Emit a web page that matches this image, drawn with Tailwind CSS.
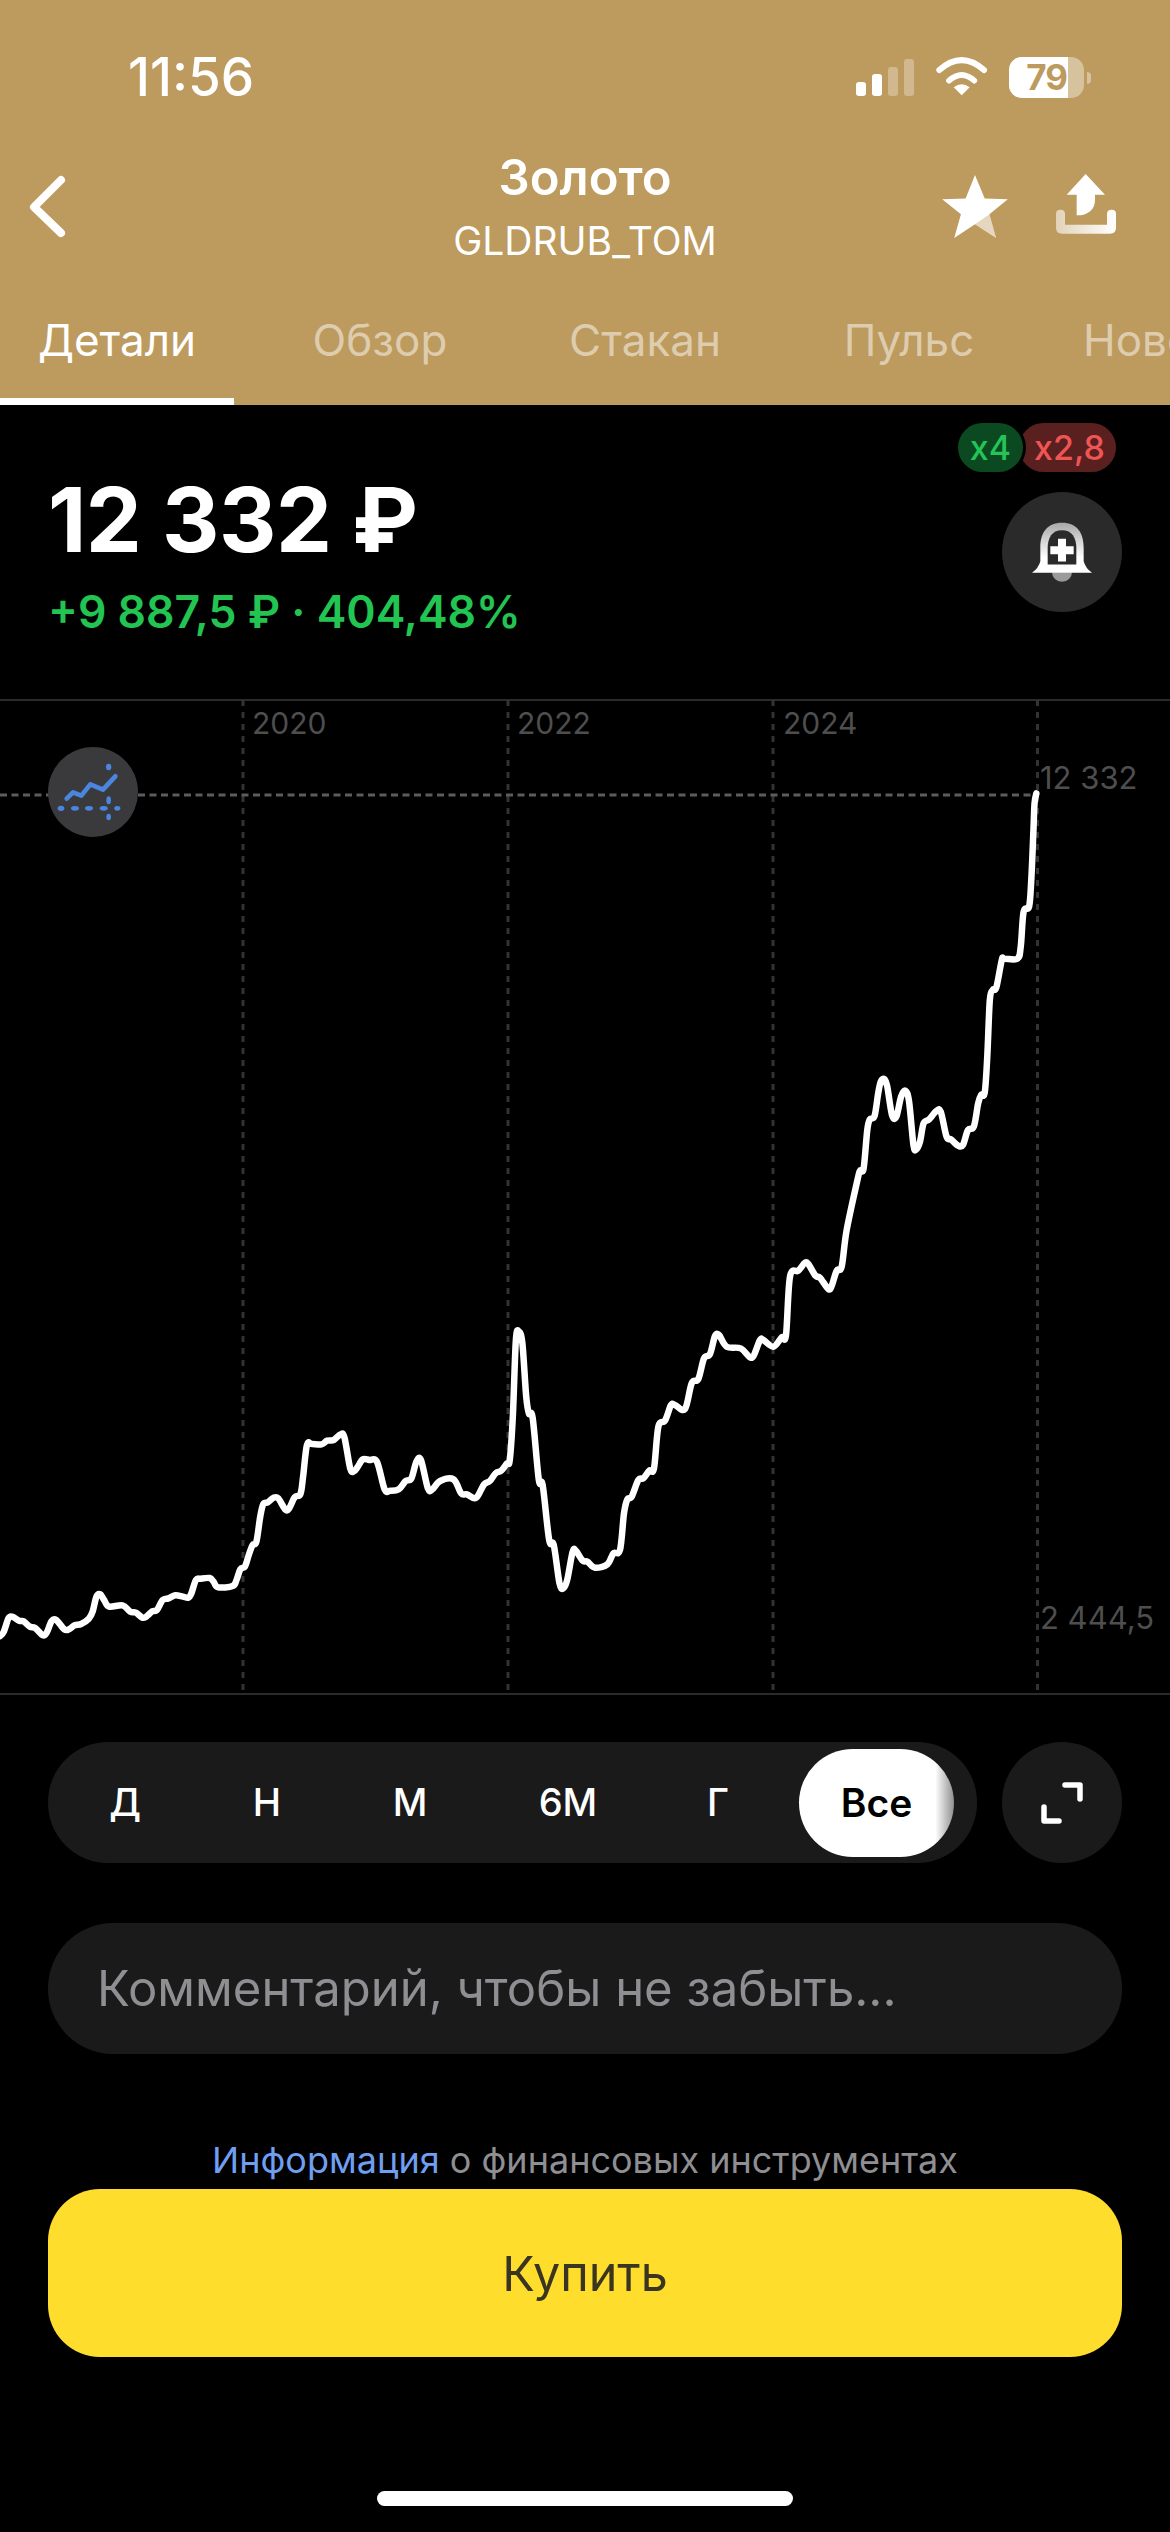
<!DOCTYPE html>
<html lang="ru">
<head>
    <meta charset="UTF-8">
    <meta name="viewport" content="width=device-width, initial-scale=1.0">
    <title>Золото</title>
    <script src="https://cdn.jsdelivr.net/npm/@tailwindcss/browser@4"></script>
</head>
<body class="bg-black w-[1170px] h-[2532px] overflow-hidden text-white font-[family-name:Inter,sans-serif]">

    <!-- Header -->
    <header class="bg-[#bd9a5e] h-[405px] flex flex-col overflow-hidden">
        <div class="h-[149px] flex justify-between pt-[52px] pl-[128px] pr-[79px]">
            <span class="text-[53px] leading-[50px] font-medium">11:56</span>
            <div class="flex items-start pt-[5px]">
                <div class="flex items-end gap-[6px] h-[37px] mt-[2px]">
                    <span class="w-[10px] h-[14px] rounded-[3px] bg-white"></span>
                    <span class="w-[10px] h-[22px] rounded-[3px] bg-white"></span>
                    <span class="w-[10px] h-[29px] rounded-[3px] bg-white/30"></span>
                    <span class="w-[10px] h-[37px] rounded-[3px] bg-white/30"></span>
                </div>
                <svg class="w-[54px] h-[40px] ml-[21px]" viewBox="104 53 162 120">
                    <path d="M117 92Q184 33 251 92" fill="none" stroke="#fff" stroke-width="18" stroke-linecap="round"/>
                    <path d="M146 124Q184 90 222 124" fill="none" stroke="#fff" stroke-width="17" stroke-linecap="round"/>
                    <path d="M184 168L160 144Q184 126 208 144Z" fill="#fff"/>
                </svg>
                <div class="relative ml-[20px] w-[75px] h-[41px] rounded-[13px] bg-white/40 overflow-hidden flex">
                    <span class="w-[59px] bg-white"></span>
                    <span class="absolute inset-0 flex items-center justify-center text-[35px] font-bold text-[#bd9a5e] tracking-[-1px]">79</span>
                </div>
                <span class="w-[4px] h-[12px] mt-[15px] ml-[3px] rounded-r-full bg-white/40"></span>
            </div>
        </div>

        <div class="relative h-[132px] flex flex-col items-center">
            <span class="text-[49px] leading-[58px] font-semibold">Золото</span>
            <span class="text-[39px] leading-[46px] mt-[11px]">GLDRUB_TOM</span>
            <svg class="absolute left-[28px] top-[25px] w-[40px] h-[64px]" viewBox="0 0 40 64" fill="none" stroke="#fff" stroke-width="8" stroke-linecap="round" stroke-linejoin="round">
                <path d="M33 6L6 33L33 59"/>
            </svg>
            <svg class="absolute left-[942px] top-[26px] w-[66px] h-[63px]" viewBox="127 405 196 188">
                <path d="M225 405L254 475L323 477L268 522L288 593L225 552L163 593L183 522L127 477L197 475Z" fill="#fff"/>
                <path d="M225 552L288 593L268 522Z" fill="#bd9a5e" fill-opacity=".4"/>
            </svg>
            <svg class="absolute left-[1056px] top-[25px] w-[60px] h-[60px]" viewBox="468 403 180 180">
                <defs>
                    <linearGradient id="tray" x1="0" y1="0" x2="1" y2="0">
                        <stop offset="0" stop-color="#e2d3b8"/>
                        <stop offset="1" stop-color="#fff"/>
                    </linearGradient>
                </defs>
                <path d="M557 403L615 465H585V480C585 510 565 527 530 527V465H500Z" fill="#fff"/>
                <path d="M468 522Q468 510 481 510Q495 510 495 522V555H621V522Q621 510 635 510Q648 510 648 522V565Q648 582 630 582H486Q468 582 468 565Z" fill="url(#tray)"/>
            </svg>
        </div>

        <nav class="relative flex-1 flex items-start text-[44px] leading-[50px] text-white/50 whitespace-nowrap">
            <div class="w-[234px] shrink-0 text-center text-white pt-[34px]">Детали</div>
            <div class="w-[292px] shrink-0 text-center pt-[34px]">Обзор</div>
            <div class="w-[238px] shrink-0 text-center pt-[34px]">Стакан</div>
            <div class="w-[290px] shrink-0 text-center pt-[34px]">Пульс</div>
            <div class="pl-[29px] shrink-0 pt-[34px]">Новости</div>
            <span class="absolute left-0 bottom-0 w-[234px] h-[7px] bg-white"></span>
        </nav>
    </header>

    <!-- Price -->
    <section class="relative h-[294px] px-[48px]">
        <div class="pt-[70px] text-[89px] leading-[89px] font-bold tracking-[-0.5px]">12 332 ₽</div>
        <div class="mt-[23px] text-[44.5px] leading-[50px] font-semibold text-[#22c552]">+9 887,5 ₽ · 404,48%</div>
        <div class="absolute left-[958px] top-[18px] flex text-[34px] leading-[49px] font-medium">
            <span class="relative z-10 w-[65px] h-[49px] rounded-full bg-[#0b4a20] text-[#25c458] text-center ring-[3px] ring-black">x4</span>
            <span class="w-[97px] h-[49px] -ml-[4px] pl-[4px] rounded-full bg-[#5a1f1f] text-[#f05555] text-center">x2,8</span>
        </div>
        <button class="absolute left-[1002px] top-[87px] w-[120px] h-[120px] rounded-full bg-[#2a2a2a] flex items-center justify-center">
            <svg class="w-[60px] h-[61px]" viewBox="275 338 180 182">
                <defs>
                    <linearGradient id="bell" x1="0" y1="0" x2="0" y2="1">
                        <stop offset="0" stop-color="#a8a8a8"/>
                        <stop offset=".7" stop-color="#fff"/>
                    </linearGradient>
                </defs>
                <path d="M335 488a30 29 0 0 0 60 0Z" fill="#9a9a9a"/>
                <path d="M365 340C320 340 300 370 300 415V455Q295 475 275 490H455Q435 475 430 455V415C430 370 410 340 365 340Z" fill="url(#bell)"/>
                <path d="M365 362C335 362 322 385 322 415V465H408V415C408 385 395 362 365 362Z" fill="#2a2a2a"/>
                <path d="M353 388H377V410H400V434H377V456H353V434H330V410H353Z" fill="#fff"/>
            </svg>
        </button>
    </section>

    <!-- Chart -->
    <section class="relative h-[996px] border-y-2 border-[#2b2b2b]">
        <svg class="absolute left-0 top-[-2px] w-[1170px] h-[996px]" viewBox="0 699 1170 996" fill="none">
            <g stroke="#333" stroke-width="3" stroke-dasharray="6 6">
                <path d="M243 700V1690"/>
                <path d="M508 700V1690"/>
                <path d="M773 700V1690"/>
                <path d="M1037.5 700V1690"/>
            </g>
            <path d="M0 795H1037" stroke="#5c5c5c" stroke-width="3" stroke-dasharray="7 4.5"/>
            <path id="line" stroke="#fff" stroke-width="6.5" stroke-linecap="round" stroke-linejoin="round"/>
        </svg>
        <span class="absolute left-[252px] top-[4px] text-[30px] leading-[36px] text-[#4e4e4e]">2020</span>
        <span class="absolute left-[517px] top-[4px] text-[30px] leading-[36px] text-[#4e4e4e]">2022</span>
        <span class="absolute left-[783px] top-[4px] text-[30px] leading-[36px] text-[#4e4e4e]">2024</span>
        <span class="absolute left-[1040px] top-[59px] text-[31px] leading-[36px] text-[#4e4e4e]">12 332</span>
        <span class="absolute left-[1040px] top-[899px] text-[31px] leading-[36px] text-[#4e4e4e]">2 444,5</span>
        <div class="absolute left-[48px] top-[46px] w-[90px] h-[90px] rounded-full bg-[#3a3a3c]">
            <svg class="w-[90px] h-[90px]" viewBox="85 80 270 270" fill="none">
                <path d="M141 235L160 216L185 226L212 192L250 208L287 168" stroke="#4a86e0" stroke-width="14" stroke-linecap="round" stroke-linejoin="round"/>
                <g fill="#4a86e0">
                    <ellipse cx="267" cy="140" rx="8" ry="10"/>
                    <ellipse cx="124" cy="264" rx="10" ry="8"/>
                    <ellipse cx="166" cy="264" rx="12" ry="7"/>
                    <ellipse cx="208" cy="264" rx="12" ry="7"/>
                    <ellipse cx="252" cy="264" rx="12" ry="7"/>
                    <ellipse cx="293" cy="264" rx="9" ry="7"/>
                    <ellipse cx="267" cy="240" rx="7" ry="12"/>
                    <ellipse cx="267" cy="290" rx="7" ry="10"/>
                </g>
            </svg>
        </div>
    </section>

    <!-- Period switch -->
    <div class="flex gap-[25px] px-[48px] mt-[47px]">
        <div class="relative w-[929px] h-[121px] rounded-[60px] bg-[#1a1a1a] text-[38px] font-medium">
            <span class="absolute left-[77px] w-[0px] flex justify-center leading-[121px]">Д</span>
            <span class="absolute left-[219px] w-[0px] flex justify-center leading-[121px]">Н</span>
            <span class="absolute left-[362px] w-[0px] flex justify-center leading-[121px]">М</span>
            <span class="absolute left-[520px] w-[0px] flex justify-center leading-[121px]">6М</span>
            <span class="absolute left-[670px] w-[0px] flex justify-center leading-[121px]">Г</span>
            <span class="absolute left-[751px] top-[7px] w-[155px] h-[108px] rounded-[54px] bg-[linear-gradient(90deg,#fff_88%,#8f8f8f_100%)] text-black text-[39px] font-semibold text-center leading-[108px]">Все</span>
        </div>
        <button class="w-[120px] h-[121px] rounded-full bg-[#1a1a1a] flex items-center justify-center">
            <svg class="w-[44px] h-[44px]" viewBox="0 0 44 44" fill="none" stroke="#fff" stroke-width="5.5" stroke-linecap="round" stroke-linejoin="round">
                <path d="M25 4H40V18"/>
                <path d="M4 26V40H19"/>
            </svg>
        </button>
    </div>

    <!-- Comment -->
    <div class="mx-[48px] mt-[60px] h-[131px] rounded-[65px] bg-[#1a1a1a] flex items-center pl-[49px] text-[49px] text-[#8e8e93]">Комментарий, чтобы не забыть...</div>

    <!-- Info and buy -->
    <p class="mt-[86px] text-center text-[36px] leading-[40px] text-[#8e8e93]"><span class="text-[#6f9ff0]">Информация</span> о финансовых инструментах</p>
    <button class="block mx-[48px] mt-[9px] w-[1074px] h-[168px] rounded-[52px] bg-[#ffdd2d] pt-[3px] text-[48.5px] text-[#3a3520] text-center">Купить</button>

    <div class="mx-auto mt-[134px] w-[416px] h-[15px] rounded-full bg-white"></div>

    <script>
        // chart points read off the picture, [x, y] per crop
        const a = [[0,1158],[10,1145],[22,1105],[32,1100],[50,1112],[62,1114],[78,1130],[92,1134],[112,1156],[122,1148],[135,1113],[147,1110],[168,1138],[180,1138],[195,1126],[212,1122],[232,1106],[242,1085],[252,1040],[262,1033],[272,1050],[285,1070],[320,1066],[340,1085],[355,1088],[372,1103],[382,1100],[398,1084],[410,1080],[425,1050],[440,1045],[458,1036],[478,1040],[492,1043],[500,1030],[512,990],[525,986],[548,984],[558,995],[570,1012],[608,1008],[618,990],[628,958],[640,950],[650,915],[660,885],[670,875],[680,800],[688,762],[700,757],[715,743],[727,745],[745,778],[755,776],[770,742],[785,732],[792,680],[802,585],[815,582],[840,583],[855,572],[872,570],[890,553],[900,562],[915,655],[925,664],[935,650],[948,628],[965,630],[985,635],[1005,718],[1020,722],[1042,718],[1060,693],[1075,685],[1088,635],[1100,630],[1118,715],[1130,718],[1150,693],[1185,688],[1205,730],[1220,733],[1240,745],[1250,735],[1265,703],[1280,693],[1295,670],[1310,662],[1325,640],[1332,630],[1340,500],[1348,270],[1356,245],[1365,280],[1375,440],[1382,490],[1392,505],[1408,690],[1418,705],[1435,870],[1447,885],[1462,1000],[1472,1015],[1482,990]];
        const b = [[8,965],[18,963],[38,992],[52,995],[75,1013],[112,1003],[130,970],[150,960],[162,850],[172,808],[185,800],[205,750],[220,745],[238,722],[252,715],[265,590],[285,572],[303,525],[315,525],[345,537],[365,460],[385,447],[402,385],[420,372],[435,318],[447,315],[470,350],[512,355],[540,382],[552,375],[570,330],[580,330],[610,350],[635,322],[648,315],[660,140],[685,122],[705,98],[715,102],[737,138],[750,143],[775,177],[785,168],[800,122],[815,110],[830,0]];
        const c = [[708,1500],[715,1472],[725,1465],[735,1350],[742,1318],[755,1308],[765,1240],[772,1205],[782,1197],[790,1220],[803,1305],[815,1310],[828,1250],[840,1232],[850,1265],[862,1395],[870,1408],[880,1385],[890,1330],[905,1318],[925,1293],[937,1295],[953,1370],[965,1378],[985,1397],[998,1395],[1012,1350],[1028,1340],[1040,1270],[1048,1245],[1058,1238],[1065,1130],[1072,960],[1080,930],[1090,922],[1105,840],[1112,836],[1148,836],[1157,800],[1165,695],[1180,680],[1186,600],[1192,450],[1195,370],[1200,340]];
        const pts = [
            ...a.map(p => [p[0] / 2.613, 1250 + p[1] / 3]),
            ...b.map(p => [570 + p[0] / 3, 1230 + p[1] / 3]),
            ...c.map(p => [600 + p[0] / 2.75, 680 + p[1] / 3])
        ];
        let d = `M${pts[0][0]} ${pts[0][1]}`;
        for (let i = 0; i < pts.length - 1; i++) {
            const p0 = pts[i - 1] || pts[i], p1 = pts[i], p2 = pts[i + 1], p3 = pts[i + 2] || p2;
            const t = 1 / 6;
            d += `C${p1[0] + (p2[0] - p0[0]) * t} ${p1[1] + (p2[1] - p0[1]) * t} ${p2[0] - (p3[0] - p1[0]) * t} ${p2[1] - (p3[1] - p1[1]) * t} ${p2[0]} ${p2[1]}`;
        }
        document.getElementById('line').setAttribute('d', d);
    </script>
</body>
</html>
